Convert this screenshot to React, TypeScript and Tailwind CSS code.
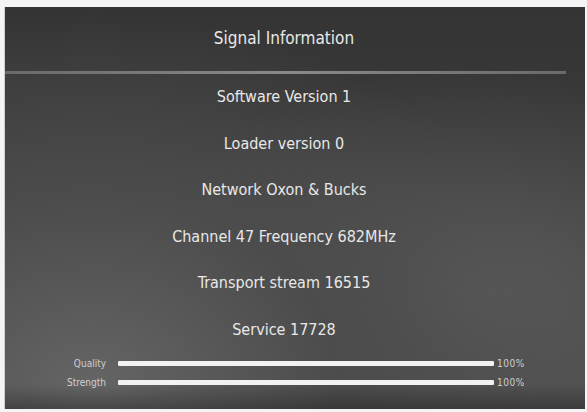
const rows = [
  'Software Version 1',
  'Loader version 0',
  'Network Oxon & Bucks',
  'Channel 47 Frequency 682MHz',
  'Transport stream 16515',
  'Service 17728',
];

const meters = [
  { label: 'Quality', value: 100 },
  { label: 'Strength', value: 100 },
];

export default function App() {
  return (
    <div className="w-[587px] h-[412px] bg-[#f4f4f4] pt-[7px] pl-[4px] pr-[2px] pb-[3px] font-['DejaVu_Sans_Condensed','DejaVu_Sans',sans-serif]">
      <div className="relative h-full border-l border-[#cfcfcf] bg-[linear-gradient(to_bottom,transparent_94%,rgba(20,20,20,0.35)_100%),radial-gradient(ellipse_at_15%_95%,#656565_0%,#4c4c4c_35%,transparent_70%),radial-gradient(ellipse_at_80%_72%,#5a5a5a_0%,transparent_55%),linear-gradient(to_bottom,#343434_0%,#3b3b3b_40%,#4a4a4a_100%)] text-[#e8e8e8] overflow-hidden">
        <div className="w-[558px] h-[64px] flex items-center justify-center text-[17px]">
          Signal Information
        </div>
        <div className="h-[3px] w-[561px] bg-gradient-to-r from-[#6a6a6a] via-[#8a8a8a] to-[#6a6a6a]" />
        <div className="w-[558px] flex flex-col">
          {rows.map((r) => (
            <div key={r} className="h-[46.5px] flex items-center justify-center text-[16px]">
              {r}
            </div>
          ))}
        </div>
        <div className="mt-[5px] flex flex-col gap-[9px]">
          {meters.map((m) => (
            <div key={m.label} className="flex items-center h-[10px]">
              <div className="w-[113px] text-right pr-[12px] text-[10px] text-[#cfcfcf]">{m.label}</div>
              <div className="w-[376px] h-[5px] bg-[#3a3a3a] rounded-[1px]">
                <div className="h-full bg-[#f2f2f2] rounded-[1px]" style={{ width: `${m.value}%` }} />
              </div>
              <div className="pl-[3px] text-[10px] tracking-[0.5px] text-[#cfcfcf]">{m.value}%</div>
            </div>
          ))}
        </div>
      </div>
    </div>
  );
}
